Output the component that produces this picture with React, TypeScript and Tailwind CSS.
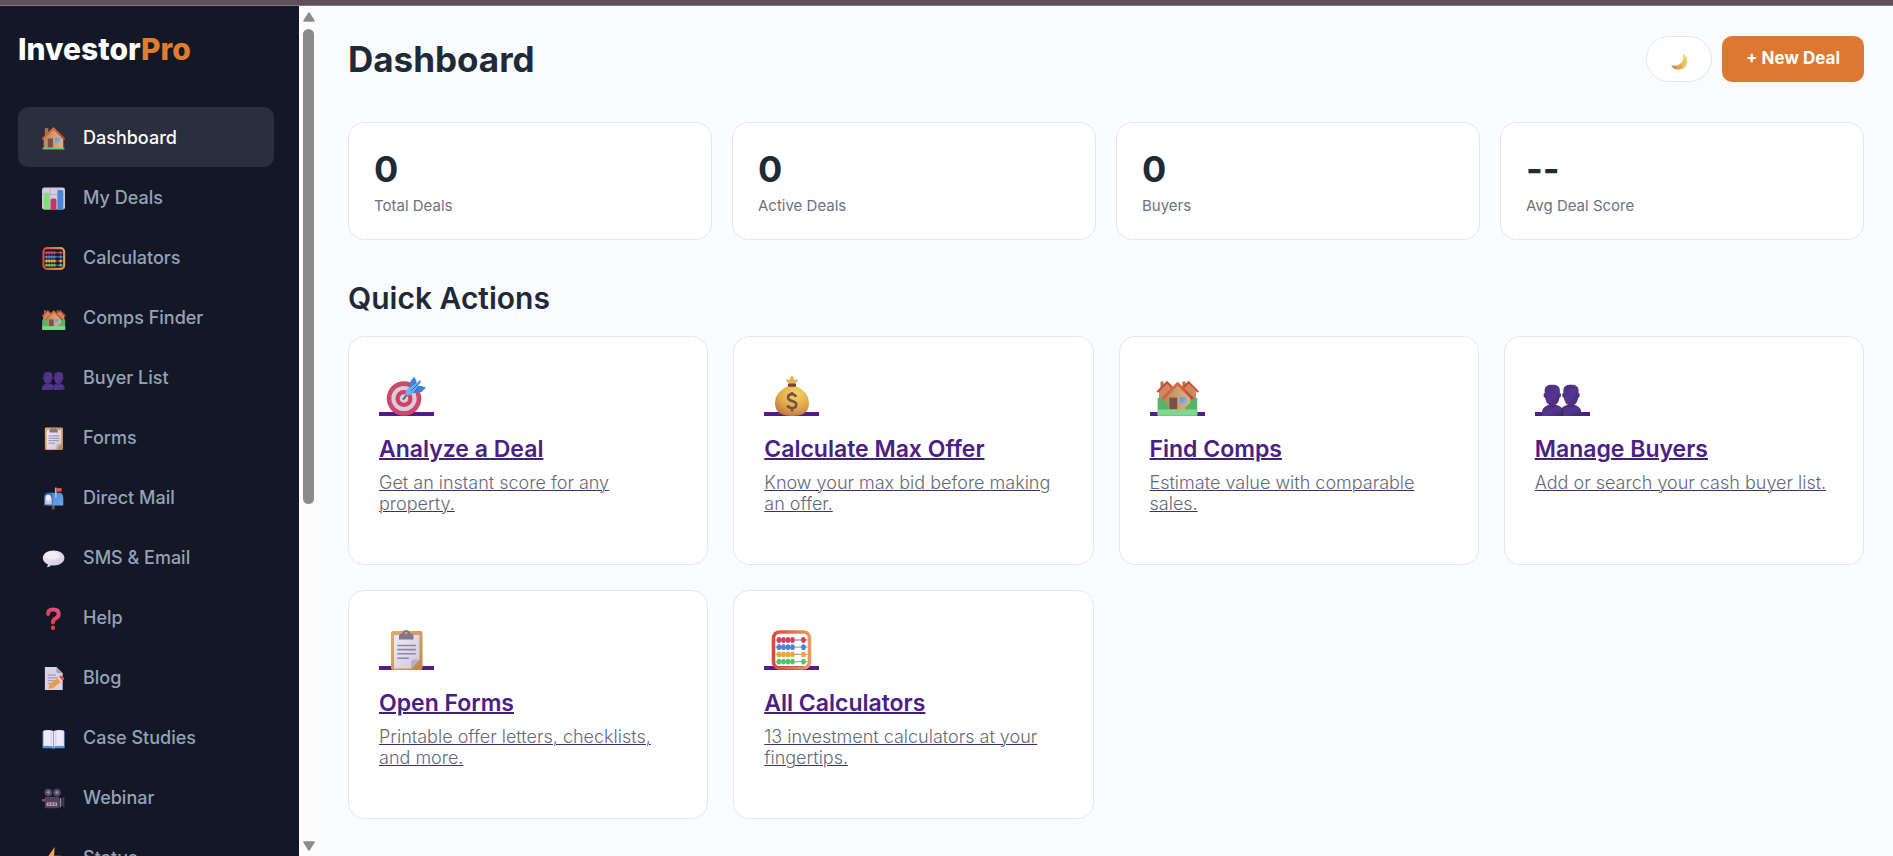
import type { ReactNode } from "react";

type IconProps = { className?: string };

function Art({ className = "", children }: IconProps & { children: ReactNode }) {
  return (
    <svg viewBox="0 0 40 40" overflow="visible" aria-hidden="true" className={`shrink-0 ${className}`}>
      {children}
    </svg>
  );
}

function Defs() {
  return (
    <svg width="0" height="0" className="absolute" aria-hidden="true">
      <defs>
        <linearGradient id="wall" x1="0" y1="0" x2="1" y2="0">
          <stop offset="0" stopColor="#b98a5c" />
          <stop offset="1" stopColor="#e0b183" />
        </linearGradient>
        <linearGradient id="roof" x1="0" y1="0" x2="1" y2="1">
          <stop offset="0" stopColor="#e57a3c" />
          <stop offset="1" stopColor="#c93f35" />
        </linearGradient>
        <linearGradient id="pane" x1="0" y1="0" x2="1" y2="1">
          <stop offset="0" stopColor="#4f93e6" />
          <stop offset="1" stopColor="#7fc4f4" />
        </linearGradient>
        <linearGradient id="grass" x1="0" y1="0" x2="0" y2="1">
          <stop offset="0" stopColor="#55b06c" />
          <stop offset="1" stopColor="#7ddc8c" />
        </linearGradient>
        <linearGradient id="frame" x1="0" y1="0" x2="1" y2="0">
          <stop offset="0" stopColor="#dc4a3a" />
          <stop offset="1" stopColor="#e89a5c" />
        </linearGradient>
        <radialGradient id="gold" cx="0.6" cy="0.25" r="0.8">
          <stop offset="0" stopColor="#f3d564" />
          <stop offset="0.6" stopColor="#e2a94c" />
          <stop offset="1" stopColor="#bd7440" />
        </radialGradient>
        <linearGradient id="person" x1="0" y1="0" x2="1" y2="1">
          <stop offset="0" stopColor="#46307a" />
          <stop offset="0.55" stopColor="#553592" />
          <stop offset="1" stopColor="#3b2a5f" />
        </linearGradient>
        <linearGradient id="paper" x1="0" y1="0" x2="1" y2="1">
          <stop offset="0" stopColor="#f0eaf8" />
          <stop offset="1" stopColor="#cfc6de" />
        </linearGradient>
        <linearGradient id="board" x1="0" y1="0" x2="1" y2="1">
          <stop offset="0" stopColor="#e0b070" />
          <stop offset="1" stopColor="#c08848" />
        </linearGradient>
        <linearGradient id="query" x1="1" y1="0" x2="0" y2="1">
          <stop offset="0" stopColor="#e0508c" />
          <stop offset="1" stopColor="#e03a3c" />
        </linearGradient>
        <linearGradient id="moon" x1="1" y1="0" x2="0" y2="1">
          <stop offset="0" stopColor="#f6dd75" />
          <stop offset="0.6" stopColor="#e8b85a" />
          <stop offset="1" stopColor="#b07048" />
        </linearGradient>
        <linearGradient id="mail" x1="0" y1="0" x2="1" y2="1">
          <stop offset="0" stopColor="#4a80d0" />
          <stop offset="1" stopColor="#6aaae8" />
        </linearGradient>
      </defs>
    </svg>
  );
}

function HomeIcon({ className }: IconProps) {
  return (
    <Art className={className}>
      <path d="M5 2h6v14H5z" fill="#a8744c" />
      <path d="M3 37V20L20 4l17 16v17z" fill="url(#wall)" />
      <path d="M1.500 20.500 20 2.500l18.500 18" fill="none" stroke="url(#roof)" strokeWidth="3.600" strokeLinecap="round" strokeLinejoin="round" />
      <path d="M10 20h9v16h-9z" fill="#775049" />
      <path d="M23 19h9v8h-9z" fill="url(#pane)" />
      <path d="M1 36h38v3H1z" fill="#5ed06c" />
    </Art>
  );
}

function ChartIcon({ className }: IconProps) {
  return (
    <Art className={className}>
      <rect x="0" y="1" width="40" height="38" rx="4" fill="#d3cbe0" />
      <path d="M0 13h40M0 26h40M14 1v38M27 1v38" stroke="#a89fb8" strokeWidth="1" />
      <path d="M3 39V13q0-3 3-3h4q3 0 3 3v26z" fill="#86dd78" />
      <path d="M15 39V23q0-3 3-3h4q3 0 3 3v16z" fill="#c7336d" />
      <path d="M27 39V8q0-3 3-3h4q3 0 3 3v31z" fill="#4787d6" />
    </Art>
  );
}

const rods = [
  { y: 10, color: "#d63c60" },
  { y: 17.2, color: "#4582d8" },
  { y: 24.4, color: "#eea735" },
  { y: 31.6, color: "#52c466" },
];

function AbacusIcon({ className }: IconProps) {
  return (
    <Art className={className}>
      <rect x="2.500" y="2" width="36" height="36" rx="6" fill="none" stroke="url(#frame)" strokeWidth="3.600" />
      {rods.map((rod) => (
        <g key={rod.y} fill={rod.color}>
          <path d={`M4.500 ${rod.y}h32`} stroke="#a6a0b2" strokeWidth="1.300" />
          {[8, 12.5, 17, 21.5, 32.5].map((x) => (
            <ellipse key={x} cx={x} cy={rod.y} rx="2.300" ry="2.900" />
          ))}
        </g>
      ))}
    </Art>
  );
}

function HousesIcon({ className }: IconProps) {
  return (
    <Art className={className}>
      <path d="M3.500 5.500h3v6h-3zM25.500 5.500h3v6h-3z" fill="#9b7a50" />
      <path d="M2 15 10 7l9 9v16H2zM39 15l-8-8-9 9v16h17z" fill="#c88a61" />
      <path d="m.8 15.500 9.200-9.300 8 8M40.800 15.500l-9.200-9.300-7 7" fill="none" stroke="#ce4a35" strokeWidth="2" strokeLinecap="round" />
      <path d="M.6 22h39.700v17.700H.6z" fill="url(#grass)" />
      <path d="M8 34V21L20.600 8.500 33 21v13z" fill="url(#wall)" />
      <path d="M6.300 22 20.600 7.600 35 22" fill="none" stroke="url(#roof)" strokeWidth="2.800" strokeLinecap="round" strokeLinejoin="round" />
      <path d="M12.400 21.600h7.800v11.800h-7.800z" fill="#765049" />
      <path d="M23.200 21.400h6.300v6.300h-6.300z" fill="url(#pane)" />
      <path d="M1 34V24a4 4 0 0 1 7 1c0 3 5 4 5 9zM40 34V24a4 4 0 0 0-6 1c0 3-6 4-6 9z" fill="#57b36c" />
      <path d="M.6 33.600h39.700v6H.6z" fill="#7fd98c" />
    </Art>
  );
}

function PeopleIcon({ className }: IconProps) {
  return (
    <Art className={className}>
      <g fill="url(#person)">
        <path d="M19 40v-6c1-3.500 4-4.500 7-5h6c5 1 7.300 3.500 7.300 8v3z" />
        <path d="M0 40v-3c0-5 3-7 7-8h7c5 1 7.500 3.500 7.500 8v3z" />
        <path d="M2.800 17C2 10.500 5 8.800 10.300 8.800s8.300 1.700 7.500 8.200c1.800 0 1.600 4.600-.4 4.800-.6 5-3.500 8-7.100 8s-6.500-3-7.100-8c-2-.2-2.200-4.800-.4-4.800z" />
        <path d="M21.500 17c-.8-6.500 2.200-8.200 7.500-8.200s8.300 1.700 7.500 8.200c1.800 0 1.600 4.600-.4 4.800-.6 5-3.500 8-7.100 8s-6.500-3-7.100-8c-2-.2-2.200-4.800-.4-4.800z" />
      </g>
      <path d="M5 29.500Q10 32.500 15.500 29.500M24 29.500q5 3 10 0M20.500 32v8" fill="none" stroke="#32245a" strokeWidth="0.900" opacity="0.6" />
    </Art>
  );
}

function ClipboardIcon({ className }: IconProps) {
  return (
    <Art className={className}>
      <rect x="5" y="1" width="31.500" height="39" rx="2" fill="url(#board)" />
      <path d="M8 5h25.500v24.500L25 38.500H8z" fill="url(#paper)" />
      <path d="M33.500 29.500 25 38.500v-6q0-3 3-3z" fill="#b9aec8" />
      <path d="M13 9.500V6q0-2 3-2.500Q17 0 20.200 0t4.300 3.500Q27.500 4 27.500 6v3.500z" fill="#827786" />
      <circle cx="20.200" cy="3" r="1.200" fill="#c7a988" />
      <path d="M11.300 15.500h18.500M11.300 19.600h18.500M11.300 23.700h18.500M11.300 28.200h11.500" stroke="#9088a2" strokeWidth="1.600" />
    </Art>
  );
}

function MailboxIcon({ className }: IconProps) {
  return (
    <Art className={className}>
      <path d="M17 30h5v9h-5z" fill="#765049" />
      <path d="M11 10h18q8 0 8 9v13H11z" fill="url(#mail)" />
      <path d="M3.500 32V18q0-8 7.500-8t7.500 8v14z" fill="#3f6bbb" />
      <path d="M6 30V19q0-5.500 5-5.500t5 5.500v11z" fill="#efe8f8" />
      <path d="m6 20 5 6 6-7v11H6z" fill="#cfc2df" />
      <path d="M22.500 1h3v18h-3z" fill="#b9b0c6" />
      <path d="M25 2h9v6h-9z" fill="#e85c3c" />
    </Art>
  );
}

function BubbleIcon({ className }: IconProps) {
  return (
    <Art className={className}>
      <path d="M20 6c10.500 0 19 5.500 19 13s-8 13-19 13l-4-.2Q13 35 8 35q3-2 2-5C5 28 1.500 24 1.500 19 1.500 11.500 9.500 6 20 6z" fill="url(#paper)" />
      <ellipse cx="18" cy="15" rx="13" ry="7" fill="#f6f2fc" opacity="0.7" />
    </Art>
  );
}

function QuestionIcon({ className }: IconProps) {
  return (
    <Art className={className}>
      <path d="M10.500 12Q11 4.500 19 4.500q10 0 10 7.700 0 5-5.500 7.800Q19 22.500 19 27" fill="none" stroke="url(#query)" strokeWidth="7" strokeLinecap="round" />
      <circle cx="19" cy="36" r="3.800" fill="#e4413f" />
    </Art>
  );
}

function MemoIcon({ className }: IconProps) {
  return (
    <Art className={className}>
      <path d="M5 0h20l11 11v29H5z" fill="#d9d1e4" />
      <path d="M25 0l11 11H28q-3 0-3-3z" fill="#aaa0b9" />
      <path d="M10 14h14M10 19h19M10 24h17M10 29h11" stroke="#948ba4" strokeWidth="1.700" />
      <path d="m11 38 2-7 17-14 6 6-17 14z" fill="#ef9a3f" />
      <path d="m27 19 3-3 6 6-3 4z" fill="#eee2e8" />
      <path d="m29.500 17 2-1.700q2-1.300 4 .7l2.500 2.600q1.700 2-.5 3.800l-2 1.600z" fill="#e14c45" />
    </Art>
  );
}

function BookIcon({ className }: IconProps) {
  return (
    <Art className={className}>
      <path d="M1 7.500h38.500V37H23q-3 2-6 0H1z" fill="#5591dd" />
      <path d="M2.500 6q10-2 17.500 1 8-3 18-1v27q-11-1-18 1-7-2-17.500-1z" fill="#efeafa" />
      <path d="M20 7v27" stroke="#8e94bd" strokeWidth="1.600" />
      <path d="M16 8v25M24 8v25" stroke="#d2cce3" strokeWidth="2" />
    </Art>
  );
}

function CameraIcon({ className }: IconProps) {
  return (
    <Art className={className}>
      <circle cx="11" cy="9.500" r="6.500" fill="#584d64" />
      <circle cx="26" cy="9.500" r="6.500" fill="#584d64" />
      <circle cx="11" cy="9.500" r="2.400" fill="#9a8fa6" />
      <circle cx="26" cy="9.500" r="2.400" fill="#9a8fa6" />
      <path d="M5 17h25v18q0 2-2 2H7q-2 0-2-2z" fill="#4e425c" />
      <path d="m30 23 9-7v20l-9-6z" fill="#40364e" />
      <path d="M31 19h2v16h-2z" fill="#9489a2" />
      <path d="M0 21h6v4H0z" fill="#6a5e75" />
      <rect x="8" y="27" width="18" height="6" rx="1" fill="#b9aec4" />
      <path d="M10 28h4v4h-4z" fill="#d24b6c" />
      <path d="M16 28h3v4h-3zM21 28h3v4h-3z" fill="#655a72" />
    </Art>
  );
}

function BoltIcon({ className }: IconProps) {
  return (
    <Art className={className}>
      <path d="M22 0 6 23h11l-6 17 22-25H21z" fill="#f4a44a" />
    </Art>
  );
}

function TargetIcon({ className }: IconProps) {
  return (
    <Art className={className}>
      <circle cx="18" cy="22.500" r="17.300" fill="#cf4867" />
      <circle cx="18" cy="22.500" r="12.600" fill="#d6cddd" />
      <circle cx="18" cy="22.500" r="8.500" fill="#d0405f" />
      <circle cx="18" cy="22.500" r="4.300" fill="#d6cddd" />
      <path d="m17.500 23 4-5" stroke="#6a5a70" strokeWidth="2" strokeLinecap="round" />
      <path d="m23 13 .5-6L28 .500 30.500 5v4.500l5 .5 4.500 1.500-4.500 4.500-8.500 1z" fill="#3f80dc" />
      <path d="M19.500 19q-.8-5 3.500-7l5.500-3.500L34 4l1.500 1.500L31 11l-3.500 5.500Q25 20.500 19.500 19z" fill="#6bb1ee" />
      <path d="m25 15 9-9M27.500 17l5-5" stroke="#3468ba" strokeWidth="1" />
    </Art>
  );
}

function MoneyIcon({ className }: IconProps) {
  return (
    <Art className={className}>
      <path d="m18 8.500-3-4.500q2-1.500 3.500.5Q19 .500 21 0q2 .5 2.500 4.500Q25 2.500 27 4l-3 4.500z" fill="#e9b055" />
      <path d="M17 10q-13 6-13 17 0 13 17 13t17-13q0-11-13-17z" fill="url(#gold)" />
      <rect x="17" y="7.500" width="8" height="3.300" rx="1" fill="#704345" />
      <path d="M25 20.800q-.8-2.500-4.200-2.500-3.800 0-3.800 3.200 0 2.500 4 3.500 4.300 1 4.300 3.700 0 3.300-4.300 3.300-3.900 0-4.500-2.800M21 16v2.500M21 32v3.500" fill="none" stroke="#765043" strokeWidth="2.500" />
    </Art>
  );
}

function MoonIcon({ className }: IconProps) {
  return (
    <Art className={className}>
      <path d="M29 1c18 15 9 38-12 38C9 39 3 35 0 28c16 6 32-5 29-27z" fill="url(#moon)" />
      <circle cx="31" cy="22" r="2" fill="#d9a94f" opacity="0.7" />
      <circle cx="22" cy="31" r="2.500" fill="#cf9a4c" opacity="0.7" />
    </Art>
  );
}

const navItems = [
  { label: "Dashboard", Icon: HomeIcon },
  { label: "My Deals", Icon: ChartIcon },
  { label: "Calculators", Icon: AbacusIcon },
  { label: "Comps Finder", Icon: HousesIcon },
  { label: "Buyer List", Icon: PeopleIcon },
  { label: "Forms", Icon: ClipboardIcon },
  { label: "Direct Mail", Icon: MailboxIcon },
  { label: "SMS & Email", Icon: BubbleIcon },
  { label: "Help", Icon: QuestionIcon },
  { label: "Blog", Icon: MemoIcon },
  { label: "Case Studies", Icon: BookIcon },
  { label: "Webinar", Icon: CameraIcon },
  { label: "Status", Icon: BoltIcon },
];

const stats = [
  { value: "0", label: "Total Deals" },
  { value: "0", label: "Active Deals" },
  { value: "0", label: "Buyers" },
  { value: "--", label: "Avg Deal Score" },
];

const actions = [
  { title: "Analyze a Deal", text: "Get an instant score for any property.", Icon: TargetIcon },
  { title: "Calculate Max Offer", text: "Know your max bid before making an offer.", Icon: MoneyIcon },
  { title: "Find Comps", text: "Estimate value with comparable sales.", Icon: HousesIcon },
  { title: "Manage Buyers", text: "Add or search your cash buyer list.", Icon: PeopleIcon },
  { title: "Open Forms", text: "Printable offer letters, checklists, and more.", Icon: ClipboardIcon },
  { title: "All Calculators", text: "13 investment calculators at your fingertips.", Icon: AbacusIcon },
];

function Sidebar() {
  return (
    <aside className="flex w-[299px] shrink-0 flex-col overflow-hidden bg-[#131726] px-[18px] pt-[23px]">
      <div className="text-[30px] leading-10 font-extrabold text-white">
        Investor<span className="text-[#e07b30]">Pro</span>
      </div>
      <nav className="mt-[38px] mr-[7px] flex flex-col">
        {navItems.map(({ label, Icon }, i) => (
          <a
            key={label}
            href="#"
            className={`flex h-[60px] shrink-0 items-center gap-[18px] rounded-[10px] px-6 pt-[2px] text-lg font-medium ${
              i === 0 ? "bg-[#2b2e3c] text-white" : "text-[#94a3b8]"
            }`}
          >
            <Icon className="size-[23px]" />
            {label}
          </a>
        ))}
      </nav>
    </aside>
  );
}

function ScrollTrack() {
  return (
    <div className="flex w-[19px] shrink-0 flex-col items-center bg-[#fcfcfc] pt-[6px] pb-[5px]" aria-hidden="true">
      <svg viewBox="0 0 12 10" className="h-[10px] w-3 shrink-0">
        <path d="M6 1 11 9H1z" fill="#8b8b8b" stroke="#8b8b8b" strokeWidth="1.500" strokeLinejoin="round" />
      </svg>
      <div className="my-[7px] flex w-full flex-1 flex-col items-center">
        <div className="h-[59%] w-[11px] rounded-full bg-[#8b8b8b]" />
      </div>
      <svg viewBox="0 0 12 10" className="h-[10px] w-3 shrink-0">
        <path d="M6 9 1 1h10z" fill="#8b8b8b" stroke="#8b8b8b" strokeWidth="1.500" strokeLinejoin="round" />
      </svg>
    </div>
  );
}

export default function App() {
  return (
    <div className="flex h-screen flex-col overflow-hidden bg-[#fafbfd] font-['Inter',sans-serif] text-[#1f2937]">
      <Defs />
      <div className="h-[6px] shrink-0 border-b border-[#81797f] bg-[#5f5059]" />
      <div className="flex min-h-0 flex-1">
        <Sidebar />
        <ScrollTrack />
        <main className="min-w-0 flex-1 overflow-hidden pt-[30px] pr-[29px] pl-[30px]">
          <header className="flex items-center justify-between">
            <h1 className="text-[35px] leading-[46px] font-bold">Dashboard</h1>
            <div className="flex gap-[10px]">
              <button
                type="button"
                aria-label="Toggle dark mode"
                className="flex h-[46px] w-[66px] items-center justify-center rounded-full border border-[#e5e7eb] bg-white"
              >
                <MoonIcon className="mt-1 size-[17px]" />
              </button>
              <button type="button" className="h-[46px] rounded-[10px] bg-[#dd7833] px-6 text-[17px] font-bold text-white">
                + New Deal
              </button>
            </div>
          </header>

          <section className="mt-10 grid grid-cols-4 gap-5">
            {stats.map((stat) => (
              <div key={stat.label} className="rounded-2xl border border-[#e5e7eb] bg-white px-[25px] py-6">
                <div className="text-4xl leading-[44px] font-bold">{stat.value}</div>
                <div className="mt-[6px] text-[15px] leading-[18px] text-[#6b7280]">{stat.label}</div>
              </div>
            ))}
          </section>

          <h2 className="mt-10 text-3xl leading-9 font-semibold">Quick Actions</h2>

          <section className="mt-5 grid grid-cols-4 gap-[25px]">
            {actions.map(({ title, text, Icon }) => (
              <a
                key={title}
                href="#"
                className="block rounded-2xl border border-[#e5e7eb] bg-white px-[30px] pt-[39px] pb-[50px]"
              >
                <div className="grid w-[55px] items-end">
                  <div className="col-start-1 row-start-1 h-1 bg-[#551a8b]" />
                  <Icon className="col-start-1 row-start-1 ml-[7px] size-10" />
                </div>
                <h3 className="mt-[19px] text-[23px] leading-7 font-semibold text-[#4b2085] underline decoration-[#3f2570] decoration-2">
                  {title}
                </h3>
                <p className="mt-[9px] text-lg leading-[21px] font-light text-[#626a77] underline decoration-[#3f2f70] decoration-1">
                  {text}
                </p>
              </a>
            ))}
          </section>
        </main>
      </div>
    </div>
  );
}
